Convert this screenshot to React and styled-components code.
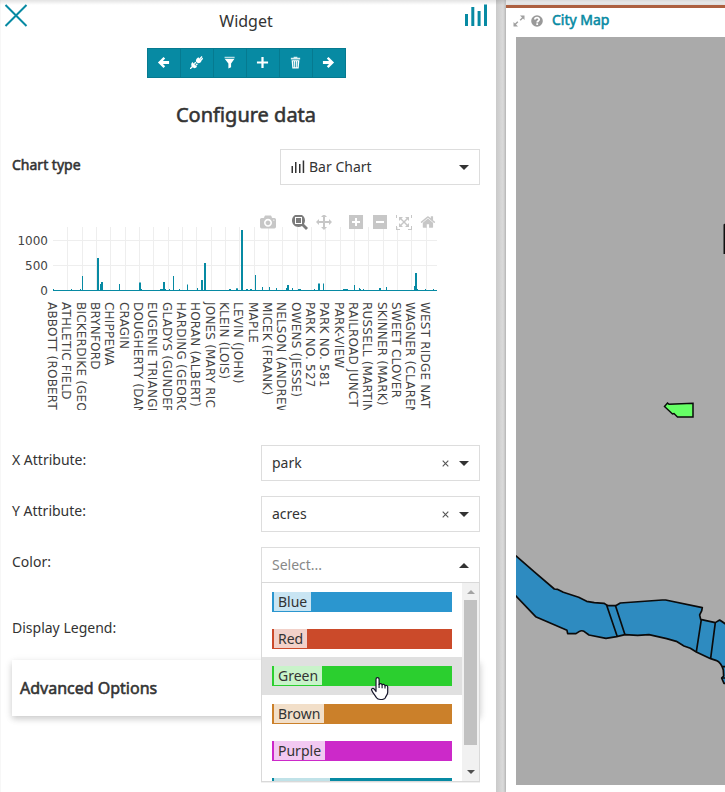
import React from 'react';
import styled, { createGlobalStyle, css } from 'styled-components';

const TEAL = '#078aa3';

const Global = createGlobalStyle`
  *, *::before, *::after { box-sizing: border-box; }
  html, body { margin: 0; height: 100%; overflow: hidden; background: #fff; }
  body { font-family: "Noto Sans", "Open Sans", sans-serif; font-size: 14px; color: #333; }
`;

const thickened = css`
  font-weight: 400;
  -webkit-text-stroke: 0.55px currentColor;
`;

const Page = styled.div`
  position: relative;
  display: grid;
  grid-template-columns: 496px minmax(0, 1fr);
  height: 792px;
  overflow: hidden;
  &::before {
    content: '';
    position: absolute;
    inset: 0 0 auto;
    height: 5px;
    z-index: 5;
    background: linear-gradient(rgba(0, 0, 0, 0.11), rgba(0, 0, 0, 0));
  }
`;

const SidePanel = styled.section`
  display: flex;
  flex-direction: column;
  padding: 0 16px 0 11px;
  border-left: 1px solid #f7f7f7;
  background: #fff;
`;

const PanelHeader = styled.header`
  display: flex;
  justify-content: space-between;
  height: 48px;
  margin: 0 -8px;
`;

const PanelTitle = styled.div`
  font-size: 16px;
  line-height: 22px;
  padding-top: 10px;
`;

const HeaderIcon = styled.svg`
  width: 24px;
  height: 24px;
  margin-top: 4px;
`;

const Toolbar = styled.div`
  display: flex;
  align-self: center;
  padding-left: 1px;
  margin-left: 1px;
`;

const ToolButton = styled.button`
  width: 34px;
  height: 30px;
  margin: 0 0 0 -1px;
  padding: 0 1px 2px 0;
  display: flex;
  align-items: center;
  justify-content: center;
  border: 1px solid #067a90;
  border-radius: 0;
  background: ${TEAL};
  svg { width: 13px; height: 13px; }
`;

const Heading = styled.h1`
  margin: 23px 0 0;
  font-size: 20px;
  line-height: 28px;
  text-align: center;
  ${thickened}
`;

const FormRow = styled.div`
  display: flex;
  justify-content: space-between;
  height: ${(p) => p.$height || 51}px;
  margin-top: ${(p) => p.$gap || 0}px;
`;

const Label = styled.label`
  font-size: 14px;
  line-height: 20px;
  padding-top: 5px;
  ${(p) => p.$strong && css`
    padding-top: 6px;
    ${thickened}
  `}
`;

const Select = styled.div`
  position: relative;
  display: flex;
  align-items: center;
  width: ${(p) => p.$width || 219}px;
  height: 36px;
  padding: 0 10px;
  border: 1px solid #ddd;
  background: #fff;
`;

const Value = styled.span`
  flex: 1;
  line-height: 20px;
  color: ${(p) => (p.$placeholder ? '#888' : '#333')};
`;

const BarGlyph = styled.svg`
  width: 15px;
  height: 14px;
  margin-right: 3px;
`;

const Clear = styled.svg`
  width: 7px;
  height: 7px;
  margin-right: 10px;
`;

const Caret = styled.svg`
  width: 10px;
  height: 5px;
`;

const ChartBlock = styled.div`
  height: 230px;
  margin: 30px -16px 0 -12px;
  svg { display: block; }
`;

const Menu = styled.div`
  position: absolute;
  z-index: 4;
  top: 34px;
  left: -1px;
  width: 219px;
  height: 200px;
  display: flex;
  border: 1px solid #d9d9d9;
  background: #fff;
  overflow: hidden;
  box-shadow: 0 1px 0 rgba(0, 0, 0, 0.06);
`;

const OptionList = styled.div`
  flex: 1;
`;

const Option = styled.div`
  height: 37.2px;
  padding: 9px 10px 0;
  background: ${(p) => (p.$hover ? '#e0e0e0' : '#fff')};
`;

const Swatch = styled.div`
  height: 20px;
  padding-left: 2px;
  display: flex;
  background: ${(p) => p.$color};
`;

const SwatchName = styled.span`
  height: 19px;
  line-height: 19px;
  padding: 0 4px;
  background: rgba(255, 255, 255, 0.75);
`;

const Scrollbar = styled.div`
  width: 17px;
  padding: 7px 2px 7px;
  display: flex;
  flex-direction: column;
  align-items: center;
  background: #f1f1f1;
`;

const ScrollArrow = styled.svg`
  width: 8px;
  height: 4px;
`;

const Thumb = styled.div`
  width: 13px;
  height: 145px;
  margin: 6px 0 auto;
  background: #c1c1c1;
`;

const Pointer = styled.svg`
  position: absolute;
  z-index: 6;
  left: 108px;
  top: 128px;
  width: 20px;
  height: 25px;
`;

const Advanced = styled.div`
  height: 56px;
  margin-top: 1px;
  padding: 0 8px;
  line-height: 56px;
  font-size: 16px;
  background: #fff;
  box-shadow: 0 3px 6px rgba(0, 0, 0, 0.15), 0 2px 9px rgba(0, 0, 0, 0.08);
  ${thickened}
`;

const Workspace = styled.main`
  padding: 5px 0 0 10px;
  background: linear-gradient(90deg, #cacaca, #dadada 7px, #d4d4d4 8px, #c8c8c8 10px, #f5f5f5 10px);
`;

const MapCard = styled.section`
  height: 787px;
  padding: 0 0 7px 10px;
  border-top: 3px solid #ad6040;
  background: #fff;
  box-shadow: 0 0 3px rgba(0, 0, 0, 0.2);
`;

const MapHeader = styled.header`
  display: flex;
  align-items: center;
  height: 29px;
  padding-bottom: 5px;
  margin-left: -3px;
`;

const MapIcon = styled.svg`
  width: 12px;
  height: 12px;
  margin-top: 1px;
  margin-right: ${(p) => p.$gap}px;
`;

const MapTitle = styled.h2`
  margin: 0;
  font-size: 14px;
  line-height: 20px;
  color: ${TEAL};
  ${thickened}
`;

const MapCanvas = styled.svg`
  display: block;
  width: 209px;
  height: 748px;
  background: #aaa;
`;

const tools = [
  ['Back', <path key="a" d="M1 7 7 1l1.8 1.8L6.4 5.4H13v3.2H6.4L8.8 11 7 13z" />],
  ['Connection', (
    <g key="b">
      <path d="M9 1.4 12.6 5C11.4 7.4 9.500 8.200 7.800 7.400L6.600 6.200C5.900 4.500 6.800 2.600 9 1.400Z" />
      <path d="M2.4 6.400 7.600 11.600C6.200 13.300 4.200 13.600 2.700 12.200 .9 10.600.9 8.300 2.400 6.400Z" />
      <path d="m0 14 3-3M10.400 3.200 13 .6M11.600 4.600l2.200-2.200M4.600 8.400l1.700-1.700M6.400 10 8 8.400" stroke="#fff" strokeWidth="1.400" />
    </g>
  )],
  ['Filter', <g key="c"><path d="M1.7.8h10.8v1.7H1.7z" opacity=".7" /><path d="M2 3.3h10.2L8.7 8v4L5.8 13.5V8z" /></g>],
  ['Add', <path key="d" d="M5.8 1h2.4v4.8H13v2.4H8.2V13H5.8V8.2H1V5.8h4.8z" />],
  ['Delete', (
    <g key="e">
      <path d="M5 .8h4v1.1h3v1.8H2V1.9h3z" opacity=".85" />
      <path fillRule="evenodd" d="M2.8 4.5h8.4l-.8 9H3.6zM4.6 5.7l.3 6.4h.7l-.2-6.4zm2 0v6.4h.8V5.7zm2 0-.2 6.4h.7l.3-6.4z" />
    </g>
  )],
  ['Forward', <path key="f" d="M13 7 7 1 5.2 2.8l2.4 2.6H1v3.2h6.6L5.2 11 7 13z" />],
];

const ticks = [
  'ABBOTT (ROBERT', 'ATHLETIC FIELD', 'BICKERDIKE (GEO', 'BRYNFORD', 'CHIPPEWA', 'CRAGIN',
  'DOUGHERTY (DAN', 'EUGENIE TRIANGL', 'GLADYS (GUNDER', 'HARDING (GEORG', 'HORAN (ALBERT)',
  'JONES (MARY RIC', 'KLEIN (LOIS)', 'LEVIN (JOHN)', 'MAPLE', 'MICEK (FRANK)', 'NELSON (ANDREW',
  'OWENS (JESSE)', 'PARK NO. 527', 'PARK NO. 581', 'PARK-VIEW', 'RAILROAD JUNCT', 'RUSSELL (MARTIN',
  'SKINNER (MARK)', 'SWEET CLOVER', 'WAGNER (CLAREN', 'WEST RIDGE NAT',
];

// [x, width, height above the baseline]
const bars = [
  [53, 1, 1], [71, 1, 1], [80, 1, 1], [82, 1, 14], [97, 2, 32], [100, 1, 6], [101, 2, 8], [119, 1, 6],
  [139, 2, 7.5], [141, 1, 1], [160, 3, 1], [163, 2, 8], [165, 1, 1], [169, 1, 1], [173, 1, 14],
  [179, 1, 1], [187, 1, 5.5], [197, 1, 2], [201, 2, 10], [204, 2, 27], [229, 2, 1], [236, 2, 1.7],
  [241, 2, 60], [246, 2, 1], [250, 2, 1], [255, 1, 15], [262, 1, 3], [269, 1, 3], [276, 1, 2],
  [286, 1, 2], [287, 2, 5], [292, 1, 2], [298, 3, 1], [314, 1, 1], [318, 2, 6.5], [323, 1, 6.5],
  [343, 5, 1], [354, 1, 5], [359, 1, 2], [360, 1, 1], [363, 1, 1], [379, 2, 2], [386, 1, 3],
  [414, 1, 4], [415, 2, 17], [417, 1, 1], [425, 1, 1], [433, 1, 1],
];

const modebar = [
  [260, 'm500 450c-83 0-150-67-150-150 0-83 67-150 150-150 83 0 150 67 150 150 0 83-67 150-150 150z m400 150h-120c-16 0-34 13-39 29l-31 93c-6 15-23 28-40 28h-340c-16 0-34-13-39-28l-31-94c-6-15-23-28-40-28h-120c-55 0-100-45-100-100v-450c0-55 45-100 100-100h800c55 0 100 45 100 100v450c0 55-45 100-100 100z m-400-550c-138 0-250 112-250 250 0 138 112 250 250 250 138 0 250-112 250-250 0-138-112-250-250-250z m365 380c-19 0-35 16-35 35 0 19 16 35 35 35 19 0 35-16 35-35 0-19-16-35-35-35z'],
  [292, 'm1000-25l-250 251c40 63 63 138 63 218 0 224-182 406-407 406-224 0-406-182-406-406s183-406 407-406c80 0 155 22 218 62l250-250 125 125z m-812 250l0 438 437 0 0-438-437 0z m62 375l313 0 0-312-313 0 0 312z'],
  [316, 'm1000 350l-187 188 0-125-250 0 0 250 125 0-188 187-187-187 125 0 0-250-250 0 0 125-188-188 186-187 0 125 252 0 0-250-125 0 187-188 188 188-125 0 0 250 250 0 0-126 187 188z'],
  [349, 'm1 787l0-875 875 0 0 875-875 0z m687-500l-187 0 0-187-125 0 0 187-188 0 0 125 188 0 0 187 125 0 0-187 187 0 0-125z'],
  [373, 'm0 788l0-876 875 0 0 876-875 0z m688-500l-500 0 0 125 500 0 0-125z'],
  [396, 'm250 850l-187 0-63 0 0-62 0-188 63 0 0 188 187 0 0 62z m688 0l-188 0 0-62 188 0 0-188 62 0 0 188 0 62-62 0z m-875-938l0 188-63 0 0-188 0-62 63 0 187 0 0 62-187 0z m875 188l0-188-188 0 0-62 188 0 62 0 0 62 0 188-62 0z m-125 188l-1 0-93-94-156 156 156 156 92-93 2 0 0 250-250 0 0-2 93-92-156-156-156 156 94 92 0 2-250 0 0-250 0 0 93 93 157-156-157-156-93 94 0 0 0-250 250 0 0 0-94 93 156 157 156-157-93-93 0 0 250 0 0 250z'],
  [420.5, 'm786 296v-267q0-15-11-26t-25-10h-214v214h-143v-214h-214q-15 0-25 10t-11 26v267q0 1 0 2t0 2l321 264 321-264q1-1 1-4z m124 39l-34-41q-5-5-12-6h-2q-7 0-12 3l-386 322-386-322q-7-4-13-4-7 2-12 7l-35 41q-4 5-3 13t6 12l401 334q18 15 42 15t43-15l136-114v109q0 8 5 13t13 5h107q8 0 13-5t5-13v-227l122-102q5-5 6-12t-4-13z'],
];

const tickX = (i) => Math.round(53 + i * 14.33);

function ParkChart() {
  return (
    <svg width="496" height="195" viewBox="0 215 496 195">
      {ticks.map((_, i) => (i ? <rect key={i} x={tickX(i)} y="227" width="1" height="63" fill="#eee" /> : null))}
      <rect x="53" y="240" width="384" height="1" fill="#eee" />
      <rect x="53" y="265" width="384" height="1" fill="#eee" />
      {modebar.map(([x, d], i) => (
        <path
          key={x}
          d={d}
          transform={`translate(${x} 214) scale(.016) matrix(1 0 0 -1 0 850)`}
          fill={i === 1 ? '#7b7b7b' : '#c7c7c7'}
        />
      ))}
      <rect x="53" y="290" width="384" height="1" fill={TEAL} />
      {bars.map(([x, w, h]) => <rect key={x} x={x} y={290 - h} width={w} height={h} fill={TEAL} />)}
      <g fontFamily='"DejaVu Sans", sans-serif' fontSize="12" fill="#444">
        {[['1000', 245], ['500', 270], ['0', 295]].map(([t, y]) => (
          <text key={t} x="48" y={y} textAnchor="end">{t}</text>
        ))}
        <g letterSpacing=".2">
          {ticks.map((t, i) => (
            <text key={t} transform={`translate(${tickX(i) - 5.5} 302) rotate(90)`}>{t}</text>
          ))}
        </g>
      </g>
    </svg>
  );
}

function DropCaret({ up }) {
  return (
    <Caret viewBox="0 0 10 5">
      <path d={up ? 'M0 5 5 0l5 5z' : 'M0 0h10L5 5z'} fill="#333" />
    </Caret>
  );
}

function ClearMark() {
  return (
    <Clear viewBox="0 0 7 7"><path d="m.7.7 5.6 5.6m0-5.6L.7 6.3" stroke="#555" strokeWidth="1.1" /></Clear>
  );
}

const colors = [
  ['Blue', '#2b96cf'], ['Red', '#cb4a2a'], ['Green', '#2bcf2f'],
  ['Brown', '#cb802a'], ['Purple', '#cc29c9'], ['Default', TEAL],
];

export default function App() {
  return (
    <>
      <Global />
      <Page>
        <SidePanel>
          <PanelHeader>
            <HeaderIcon viewBox="0 0 24 24"><path d="m1.5 1 21 21m0-21-21 21" stroke={TEAL} strokeWidth="2" /></HeaderIcon>
            <PanelTitle>Widget</PanelTitle>
            <HeaderIcon viewBox="0 0 24 24">
              <path d="M1 10h3v12H1zm6.3-7h3v19h-3zm6.3 4h3v15h-3zM20 .5h3V22h-3z" fill={TEAL} />
            </HeaderIcon>
          </PanelHeader>
          <Toolbar>
            {tools.map(([name, icon]) => (
              <ToolButton key={name} aria-label={name}>
                <svg viewBox="0 0 14 14" fill="#fff">{icon}</svg>
              </ToolButton>
            ))}
          </Toolbar>
          <Heading>Configure data</Heading>
          <FormRow $height={36} $gap={20}>
            <Label $strong>Chart type</Label>
            <Select $width={200}>
              <BarGlyph viewBox="0 0 15 14">
                <path d="M.5 6H2v7H.5zM4 2h1.5v11H4zM8 4h1.5v9H8zM11.7.5h1.5V13h-1.5z" fill="#333" />
              </BarGlyph>
              <Value>Bar Chart</Value>
              <DropCaret />
            </Select>
          </FormRow>
          <ChartBlock><ParkChart /></ChartBlock>
          <FormRow>
            <Label>X Attribute:</Label>
            <Select><Value>park</Value><ClearMark /><DropCaret /></Select>
          </FormRow>
          <FormRow>
            <Label>Y Attribute:</Label>
            <Select><Value>acres</Value><ClearMark /><DropCaret /></Select>
          </FormRow>
          <FormRow $height={66}>
            <Label>Color:</Label>
            <Select>
              <Value $placeholder>Select...</Value>
              <DropCaret up />
              <Menu>
                <OptionList>
                  {colors.map(([name, color]) => (
                    <Option key={name} $hover={name === 'Green'}>
                      <Swatch $color={color}><SwatchName>{name}</SwatchName></Swatch>
                    </Option>
                  ))}
                </OptionList>
                <Scrollbar>
                  <ScrollArrow viewBox="0 0 8 4"><path d="M0 4 4 0l4 4z" fill="#a3a3a3" /></ScrollArrow>
                  <Thumb />
                  <ScrollArrow viewBox="0 0 8 4"><path d="M0 0h8L4 4z" fill="#505050" /></ScrollArrow>
                </Scrollbar>
              </Menu>
              <Pointer viewBox="0 0 20 25">
                <path
                  d="M6 15.5V3.2c0-2 3.1-2 3.1 0v5.2c.5-1.1 2.7-1 3 .5.8-.9 2.6-.6 2.9.9.9-.8 2.7-.3 2.7 1.2v5.2c0 2.6-1.8 3.8-2.3 5.4-.3 1-1.2 1.9-5 1.9-2.3 0-3.2-.5-3.9-1.7-1.3-2.3-3.7-4.8-4.8-7.5-.8-1.800 1.500-2.600 2.600-1.200z"
                  fill="#fff" stroke="#15152a" strokeWidth="1.2" strokeLinejoin="round"
                />
                <path d="M9.1 8v4M12.1 9v3.3M15 10v2.5" stroke="#15152a" strokeWidth="1.1" />
              </Pointer>
            </Select>
          </FormRow>
          <FormRow $height={46}><Label>Display Legend:</Label></FormRow>
          <Advanced>Advanced Options</Advanced>
        </SidePanel>
        <Workspace>
          <MapCard>
            <MapHeader>
              <MapIcon $gap={6} viewBox="0 0 12 12">
                <path d="M7 .5h4.500V5L10 3.500 7.700 5.800l-1-1L9 2.500zM5 11.500H.5V7L2 8.500l2.300-2.300 1 1L3 9.500z" fill="#a0a0a0" />
              </MapIcon>
              <MapIcon $gap={9} viewBox="0 0 12 12">
                <circle cx="6" cy="6" r="5.8" fill="#999" />
                <path d="M3.9 4.600C3.900 2 8.200 2 8.200 4.500 8.200 5.900 6.200 6 6.200 7.400M6.200 8.200v1.700" fill="none" stroke="#fff" strokeWidth="1.800" />
              </MapIcon>
              <MapTitle>City Map</MapTitle>
            </MapHeader>
            <MapCanvas viewBox="516 37 209 748">
              <g transform="translate(505 540) scale(.3333)" stroke="#0b0b0b" strokeWidth="5" strokeLinejoin="round">
                <path
                  d="M22 36 33 48 88 96 148 147 157 148 175 157 221 172 245 184 268 188 297 190 308 197H332L346 189 472 180 482 180 592 203 590 213 584 225 587 238 600 241 631 248 644 240 672 259V430L657 430 650 414 656 408 655 390C652 378 643 364 635 362L617 356 574 336 556 325 537 318 514 304 485 296 432 284 398 286 360 284 335 290 303 295 252 285 237 274Q230 270 222 275L213 281H188L186 271 92 230 33 168 22 160Z"
                  fill="#2e8bc0"
                />
                <path d="m304 193 33 97M331 196l29 88M589 239l-15 97M631 248l-14 107M652 380h20M650 414h20" fill="none" />
              </g>
              <path d="m664.500 406.500 3-3.500 1.500 1.300 24-1V417H677.500l-3.500-3.500-1.500.5z" fill="#66ff66" stroke="#0b0b0b" strokeWidth="1.500" />
              <path d="M723.500 224.500 727 222v32h-3.500z" fill="#111" />
            </MapCanvas>
          </MapCard>
        </Workspace>
      </Page>
    </>
  );
}
